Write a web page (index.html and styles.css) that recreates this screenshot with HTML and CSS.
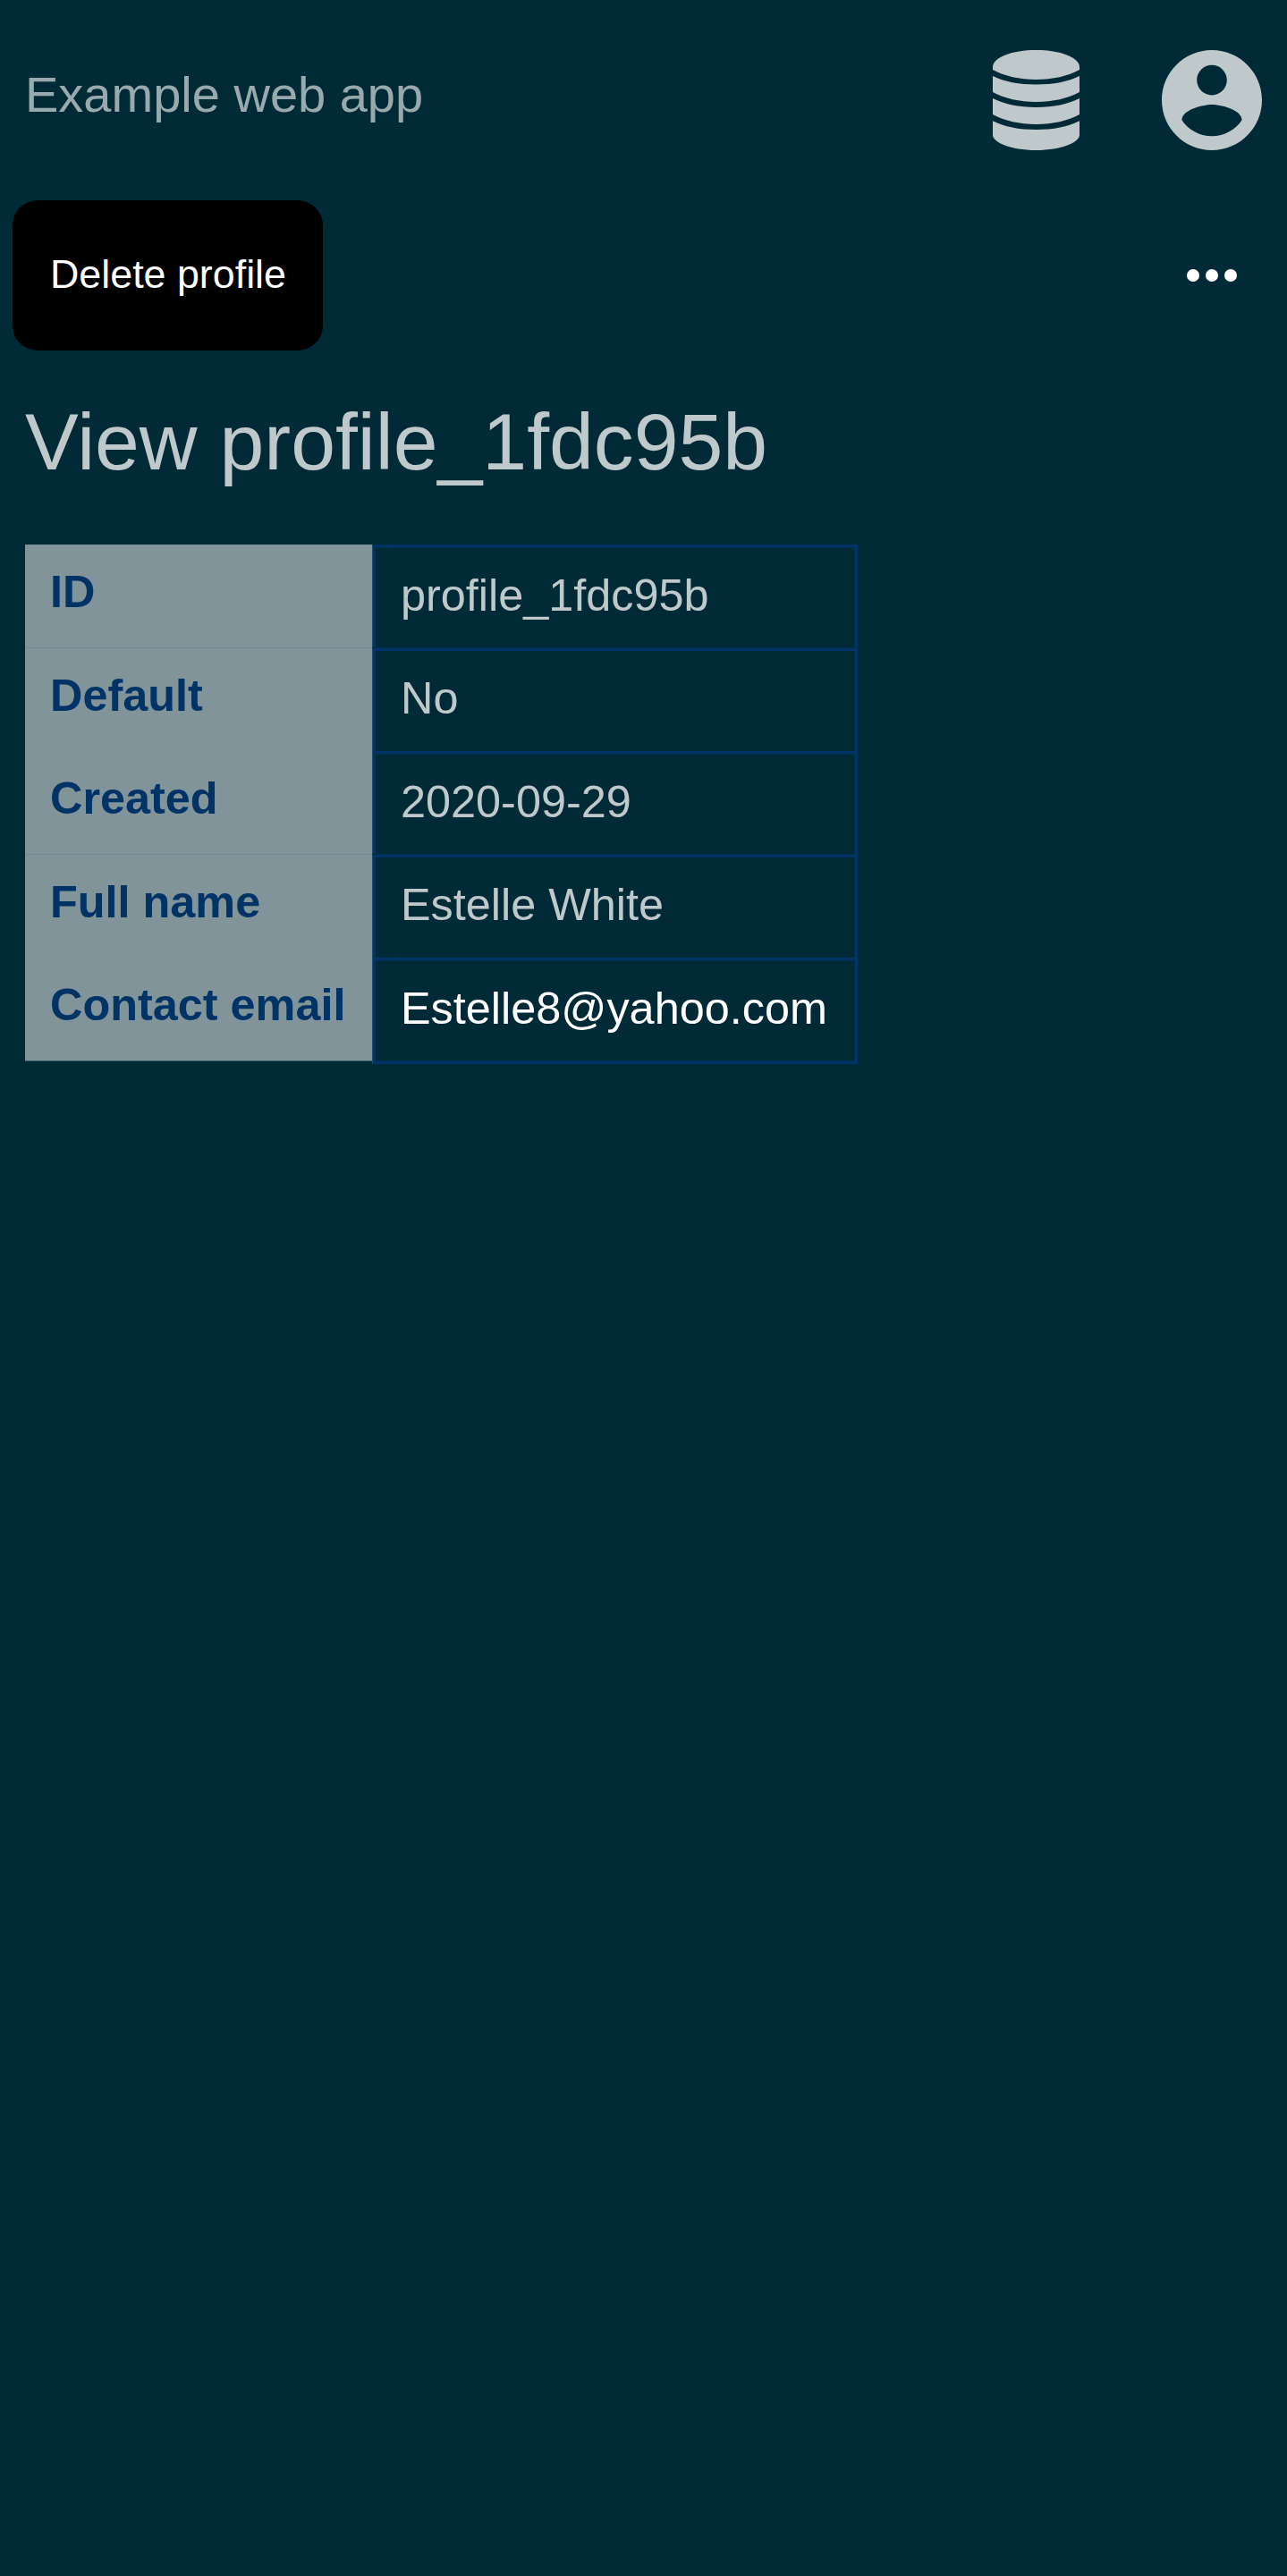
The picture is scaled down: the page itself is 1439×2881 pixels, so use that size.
FILE: index.html
```html
<!DOCTYPE html>
<html lang="en">
<head>
<meta charset="utf-8">
<title>View profile</title>
<link rel="stylesheet" href="styles.css">
</head>
<body>
<header class="topbar">
  <span class="brand">Example web app</span>
  <nav class="topnav">
    <svg class="icon-db" viewBox="0 0 97 112" aria-hidden="true">
      <path d="M0 19C0 8 22 0 48.500 0S97 8 97 19V22C84 29 67 33 48.500 33S13 29 0 22Z"/>
      <path d="M0 29C13 35.500 29 38.500 48.500 38.500S84 35.500 97 29V47C84 54 67 58 48.500 58S13 54 0 47Z"/>
      <path d="M0 54C13 60.500 29 64 48.500 64S84 60.500 97 54V72C84 79 67 83 48.500 83S13 79 0 72Z"/>
      <path d="M0 79.300C13 86 29 89 48.500 89S84 86 97 79.300V95C97 103 77 112 48.500 112S0 103 0 95Z"/>
    </svg>
    <svg class="icon-user" viewBox="2 2 20 20" aria-hidden="true">
      <path fill-rule="evenodd" d="M12 2C6.480 2 2 6.480 2 12s4.480 10 10 10 10-4.480 10-10S17.520 2 12 2zm0 3c1.660 0 3 1.340 3 3s-1.340 3-3 3-3-1.340-3-3 1.340-3 3-3zm0 14.200c-2.500 0-4.710-1.280-6-3.220.030-1.990 4-3.080 6-3.080 1.990 0 5.970 1.090 6 3.080-1.290 1.940-3.500 3.220-6 3.220z"/>
    </svg>
  </nav>
</header>
<div class="actions">
  <button class="delete" type="button">Delete profile</button>
  <svg class="icon-more" viewBox="0 0 56 14" aria-hidden="true"><circle cx="7" cy="7" r="7"/><circle cx="28" cy="7" r="7"/><circle cx="49" cy="7" r="7"/></svg>
</div>
<main class="content">
  <h1 class="title">View profile_1fdc95b</h1>
  <dl class="details">
    <div class="row"><dt class="label">ID</dt><dd class="value">profile_1fdc95b</dd></div>
    <div class="row seam"><dt class="label">Default</dt><dd class="value">No</dd></div>
    <div class="row"><dt class="label">Created</dt><dd class="value">2020-09-29</dd></div>
    <div class="row seam"><dt class="label">Full name</dt><dd class="value">Estelle White</dd></div>
    <div class="row last"><dt class="label">Contact email</dt><dd class="value"><a class="mail">Estelle8@yahoo.com</a></dd></div>
  </dl>
</main>
</body>
</html>
```

FILE: styles.css
```css
* { box-sizing: border-box; }
body {
  margin: 0;
  min-height: 2881px;
  background: #002b36;
  color: #bfc9cc;
  font-family: "Liberation Sans", Arial, sans-serif;
  font-size: 56px;
}
.topbar {
  display: flex;
  align-items: center;
  justify-content: space-between;
  height: 224px;
  padding: 0 28px;
}
.brand { color: #99aaaf; line-height: 64px; margin-top: -12px; }
.topnav { display: flex; align-items: center; gap: 92px; fill: #bfc9cc; }
.icon-db { display: block; width: 97px; height: 112px; }
.icon-user { display: block; width: 112px; height: 112px; }
.actions {
  display: flex;
  align-items: center;
  justify-content: space-between;
  height: 168px;
  padding: 0 56.500px 0 14px;
}
.delete {
  width: 346.500px;
  height: 168px;
  padding: 0 0 4px 1.500px;
  border: 0;
  border-radius: 28px;
  background: #000;
  color: #fff;
  font: 44.800px/52px "Liberation Sans", Arial, sans-serif;
}
.icon-more { display: block; width: 56px; height: 14px; fill: #fff; }
.content { padding: 50px 28px 0; }
.title { margin: 0; height: 167px; font-size: 89.600px; font-weight: 400; line-height: 104px; }
.details { width: 931px; margin: 0; font-size: 50.400px; line-height: 58px; }
.row { display: flex; height: 115px; }
.row.seam { height: 116px; }
.label {
  width: 388px;
  padding: 24px 28px 0;
  background: #80949a;
  color: #003366;
  font-weight: 700;
}
.seam .label { padding-top: 25px; box-shadow: inset 0 1px #758b93; }
.last .label { box-shadow: 0 1px #40606a; }
.value {
  flex: 1;
  margin: 0 0 0 1px;
  padding: 25px 27px 0 28px;
  border: 3px solid #003366;
  border-bottom: 0;
  box-shadow: -1px 0 #1f4c6f, inset -1px 1px #002f4e;
}
.seam .value {
  margin-top: 1px;
  padding-top: 24px;
  box-shadow: -1px 0 #1f4c6f, 0 -1px #002f4e, inset -1px 0 #002f4e;
}
.last .value {
  height: 119px;
  border-bottom: 3px solid #003366;
  box-shadow: -1px 0 #1f4c6f, inset -1px 1px #002f4e, inset 0 -1px #002f4e;
}
.mail { color: #fff; }
```
